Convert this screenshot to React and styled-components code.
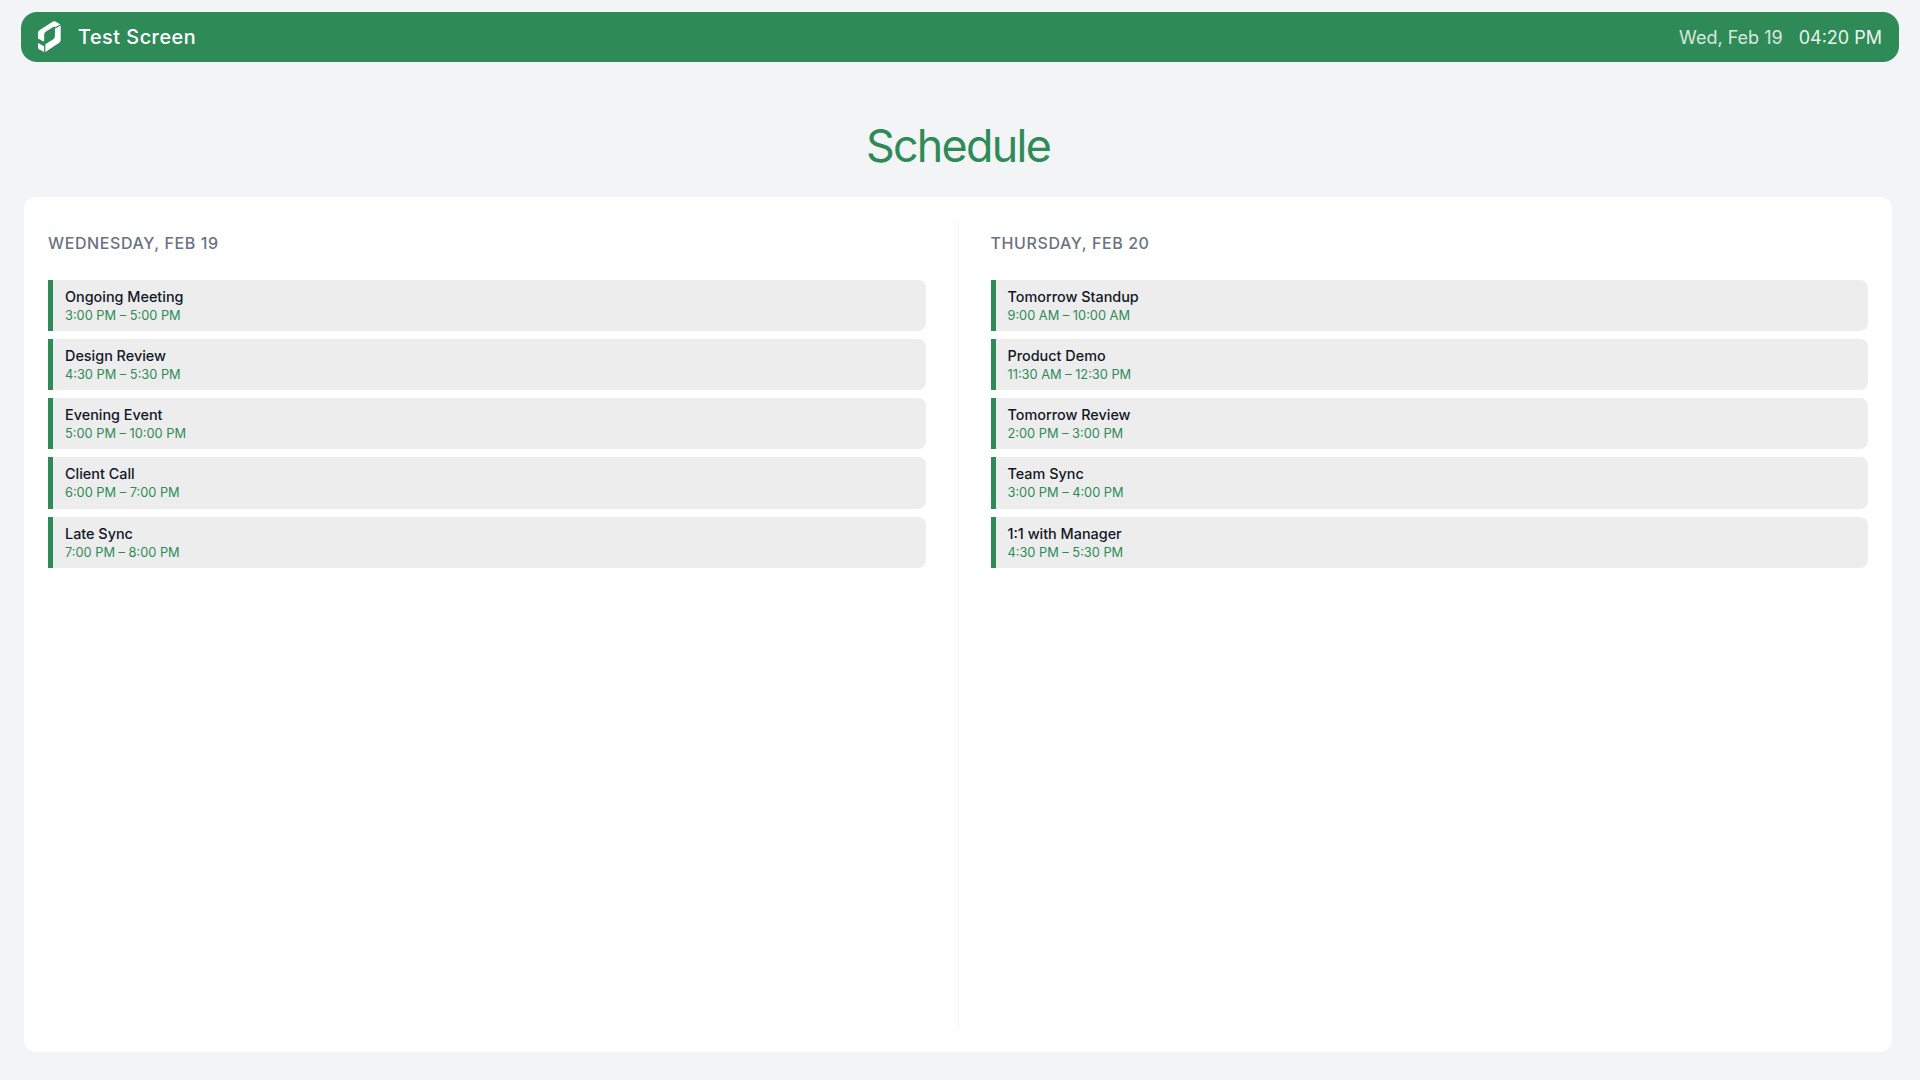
import React from 'react';
import styled, { createGlobalStyle } from 'styled-components';

const GlobalStyle = createGlobalStyle`
  body {
    margin: 0;
    background: #f3f4f6;
    font-family: Inter, "Liberation Sans", sans-serif;
  }
`;

const Screen = styled.div`
  box-sizing: border-box;
  height: 1080px;
  padding: 12px 28px 28px 24px;
  display: flex;
  flex-direction: column;
  overflow: hidden;
`;

const Header = styled.header`
  box-sizing: border-box;
  flex: none;
  height: 50px;
  margin: 0 -7px 0 -3px;
  padding: 0 17px;
  display: flex;
  align-items: center;
  justify-content: space-between;
  border-radius: 16px;
  background: #2e8b57;
  color: #fff;
`;

const Brand = styled.div`
  display: flex;
  align-items: center;
  gap: 17px;
`;

const Logo = styled.svg`
  display: block;
  width: 23px;
  height: 31px;
  margin-top: -1px;
`;

const ScreenName = styled.span`
  font-size: 19.8px;
  line-height: 28px;
  font-weight: 500;
  letter-spacing: 0.54px;
`;

const Clock = styled.div`
  display: flex;
  gap: 16px;
  padding-top: 1px;
  font-size: 18px;
  line-height: 28px;
`;

const DateText = styled.span`
  opacity: 0.8;
`;

const TimeText = styled.span`
  opacity: 0.9;
`;

const Title = styled.h1`
  flex: none;
  margin: 60px 0 27px;
  font-size: 44.8px;
  line-height: 48px;
  font-weight: 400;
  letter-spacing: -1.7px;
  text-align: center;
  color: #2e8b57;
`;

const Card = styled.main`
  box-sizing: border-box;
  flex: 1;
  display: flex;
  padding: 24px;
  border-radius: 12px;
  background: #fff;
`;

const Day = styled.section`
  flex: 1;
  ${(p) => (p.$first
    ? 'padding-right: 32px; border-right: 1px solid #f3f4f6;'
    : 'padding-left: 32px;')}
`;

const DayName = styled.h2`
  margin: 10px 0 25px;
  font-size: 16px;
  line-height: 24px;
  font-weight: 500;
  letter-spacing: 0.6px;
  text-transform: uppercase;
  color: #6b7280;
`;

const Events = styled.div`
  display: flex;
  flex-direction: column;
  gap: 8px;
`;

const Event = styled.article`
  box-sizing: border-box;
  height: 51.15px;
  padding: 8px 12px;
  border-left: 5px solid #2e8b57;
  border-radius: 0 8px 8px 0;
  background: #ededed;
`;

const EventTitle = styled.div`
  font-size: 14.4px;
  line-height: 18px;
  font-weight: 500;
  color: #111827;
`;

const EventTime = styled.div`
  font-size: 12.8px;
  line-height: 19.5px;
  color: #2e8b57;
`;

const days = [
  {
    name: 'Wednesday, Feb 19',
    events: [
      ['Ongoing Meeting', '3:00 PM – 5:00 PM'],
      ['Design Review', '4:30 PM – 5:30 PM'],
      ['Evening Event', '5:00 PM – 10:00 PM'],
      ['Client Call', '6:00 PM – 7:00 PM'],
      ['Late Sync', '7:00 PM – 8:00 PM'],
    ],
  },
  {
    name: 'Thursday, Feb 20',
    events: [
      ['Tomorrow Standup', '9:00 AM – 10:00 AM'],
      ['Product Demo', '11:30 AM – 12:30 PM'],
      ['Tomorrow Review', '2:00 PM – 3:00 PM'],
      ['Team Sync', '3:00 PM – 4:00 PM'],
      ['1:1 with Manager', '4:30 PM – 5:30 PM'],
    ],
  },
];

export default function App() {
  return (
    <>
      <GlobalStyle />
      <Screen>
        <Header>
          <Brand>
            <Logo viewBox="0 0 23 31" fill="#fff">
              <path d="M0 12.2Q0 10.2 1.7 9.1L14.6.7Q16-.2 17.4.6L22.4 3.6 17.2 6.2 16 5.6 8 10.6Q6.2 11.7 6.2 13.6V19.4L5.4 20.6 0 17.6Z" />
              <path d="M16.9 7.8 22.7 4.6V18.8Q22.7 20.7 21.2 21.7L7.4 31V23.2L15.3 18.2Q16.9 17.1 16.9 15.2Z" />
              <path d="M0 22 6.1 25.2V31L1 28.2Q0 27.6 0 26.5Z" />
            </Logo>
            <ScreenName>Test Screen</ScreenName>
          </Brand>
          <Clock>
            <DateText>Wed, Feb 19</DateText>
            <TimeText>04:20 PM</TimeText>
          </Clock>
        </Header>
        <Title>Schedule</Title>
        <Card>
          {days.map((day, i) => (
            <Day key={day.name} $first={i === 0}>
              <DayName>{day.name}</DayName>
              <Events>
                {day.events.map(([title, time]) => (
                  <Event key={title}>
                    <EventTitle>{title}</EventTitle>
                    <EventTime>{time}</EventTime>
                  </Event>
                ))}
              </Events>
            </Day>
          ))}
        </Card>
      </Screen>
    </>
  );
}
